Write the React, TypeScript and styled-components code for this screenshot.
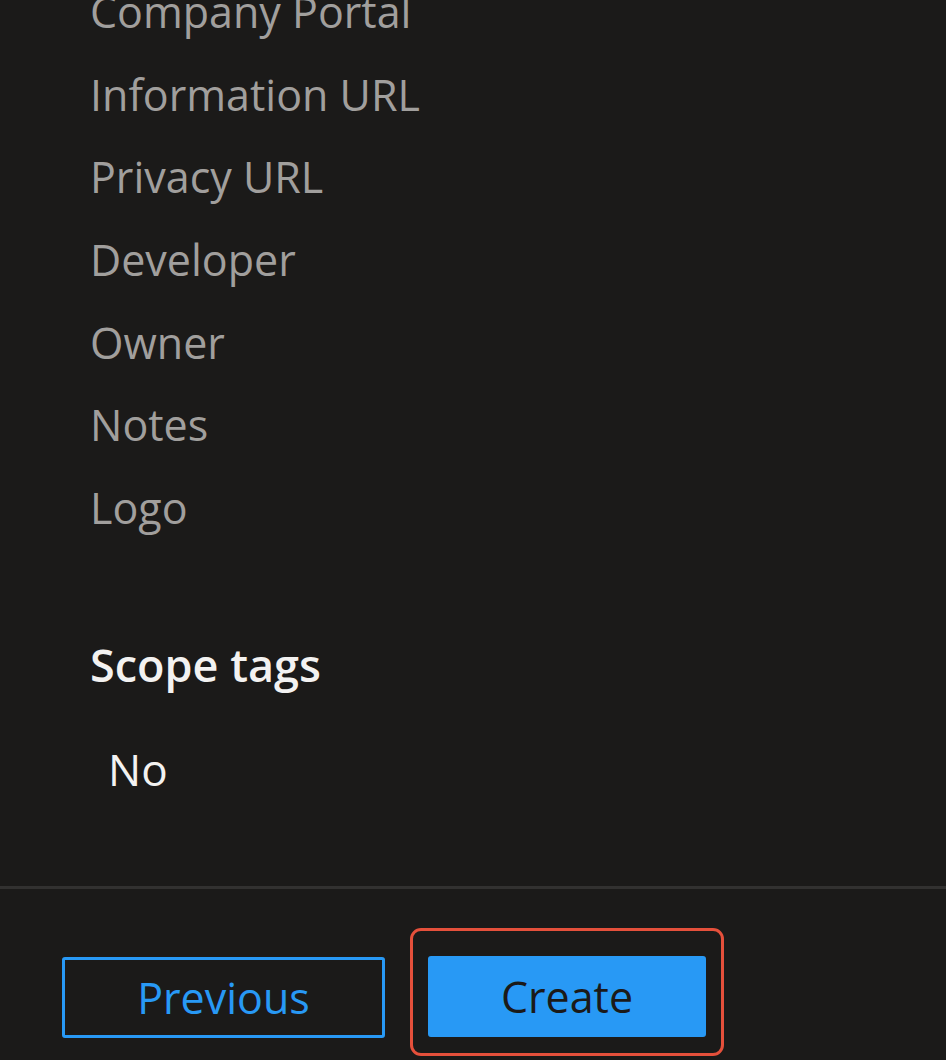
import styled, { createGlobalStyle } from 'styled-components'

const GlobalStyle = createGlobalStyle`
  html, body {
    margin: 0;
    padding: 0;
    background: #1b1a19;
    overflow: hidden;
  }
  body {
    font-family: 'Open Sans', 'Noto Sans', 'Liberation Sans', sans-serif;
  }
`

const Page = styled.div`
  width: 946px;
  height: 1060px;
  display: flex;
  flex-direction: column;
  background: #1b1a19;
  overflow: hidden;
`

const Body = styled.div`
  flex: 1;
  padding-left: 90px;
  display: flex;
  flex-direction: column;
`

const FieldList = styled.ul`
  list-style: none;
  margin: -29px 0 0;
  padding: 0;
`

const Field = styled.li`
  height: 82.7px;
  line-height: 82.7px;
  font-size: 43px;
  color: #a19f9d;
  white-space: nowrap;
`

const SectionTitle = styled.h2`
  margin: 74px 0 0;
  font-size: 45px;
  font-weight: 600;
  color: #f3f2f1;
  line-height: 82px;
`

const Value = styled.div`
  margin-top: 22px;
  padding-left: 18px;
  font-size: 44px;
  color: #f3f2f1;
  line-height: 82px;
`

const Footer = styled.div`
  flex-shrink: 0;
  border-top: 3px solid #323130;
  height: 174px;
  box-sizing: border-box;
  padding: 53px 0 0 62px;
  display: flex;
  align-items: flex-start;
  gap: 25px;
`

const Button = styled.button<{ $primary?: boolean }>`
  height: 81px;
  box-sizing: border-box;
  padding: 0;
  border-radius: 3px;
  font-family: inherit;
  font-size: 43px;
  cursor: pointer;
  border: 3px solid #2899f5;
  background: ${(p) => (p.$primary ? '#2899f5' : 'transparent')};
  color: ${(p) => (p.$primary ? '#1b1a19' : '#2899f5')};
`

const PreviousButton = styled(Button)`
  width: 323px;
  margin-top: 15px;
  font-weight: 500;
`

const CreateButton = styled(Button)`
  width: 278px;
`

// red annotation ring round the Create button
const Highlight = styled.div`
  padding: 25px 15px 16px;
  border: 3.5px solid #e5503b;
  border-radius: 11px;
  margin-top: -14px;
`

const fields = [
  'Company Portal',
  'Information URL',
  'Privacy URL',
  'Developer',
  'Owner',
  'Notes',
  'Logo',
]

export default function App() {
  return (
    <>
      <GlobalStyle />
      <Page>
        <Body>
          <FieldList>
            {fields.map((f) => (
              <Field key={f}>{f}</Field>
            ))}
          </FieldList>
          <SectionTitle>Scope tags</SectionTitle>
          <Value>No</Value>
        </Body>
        <Footer>
          <PreviousButton>Previous</PreviousButton>
          <Highlight>
            <CreateButton $primary>Create</CreateButton>
          </Highlight>
        </Footer>
      </Page>
    </>
  )
}
